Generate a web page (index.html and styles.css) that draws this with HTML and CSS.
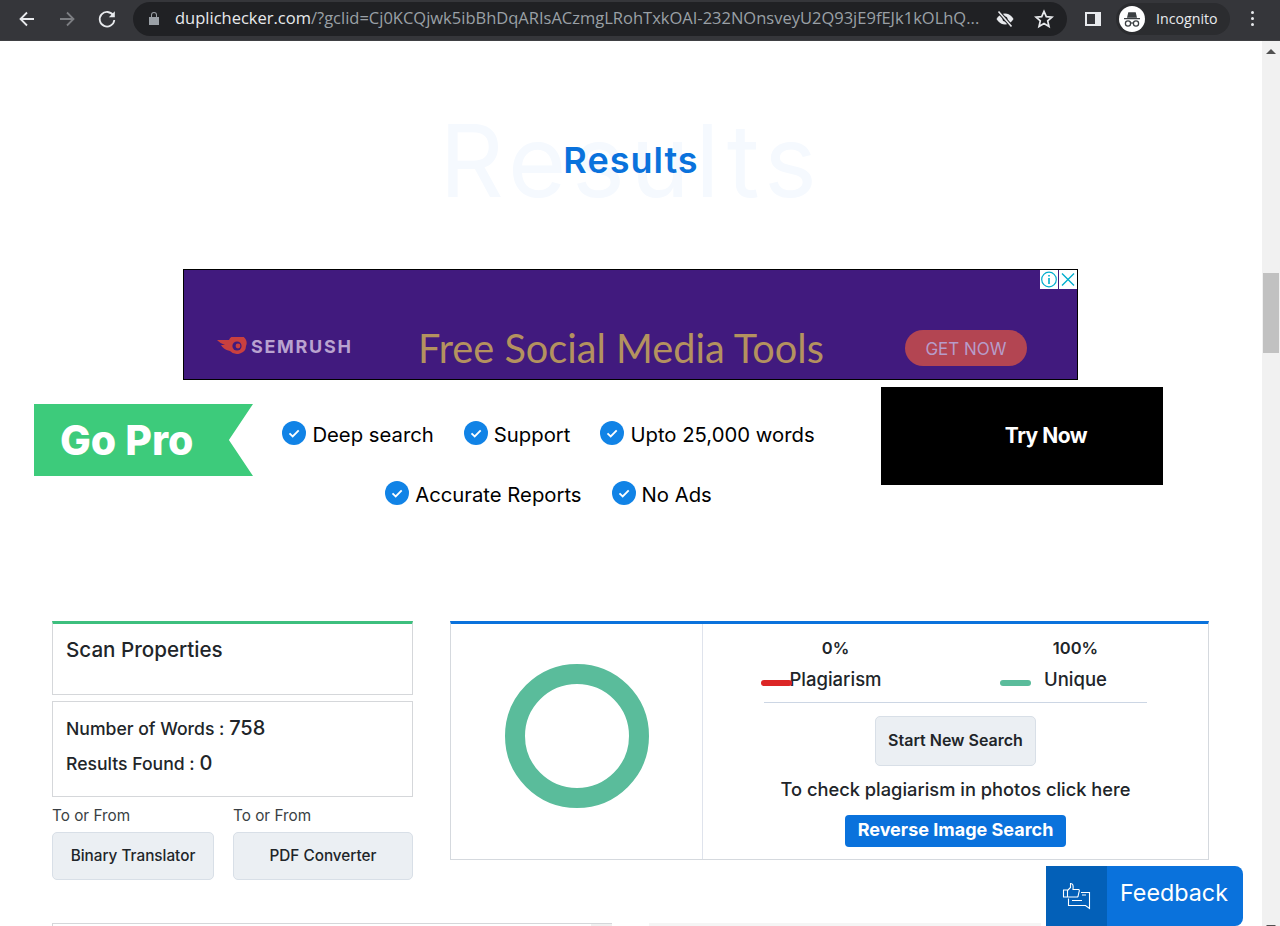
FILE: index.html
```html
<!DOCTYPE html>
<html lang="en">
<head>
    <meta charset="UTF-8">
    <meta name="viewport" content="width=device-width, initial-scale=1.0">
    <title>Duplichecker Results</title>
    <link rel="stylesheet" href="styles.css">
</head>
<body>
    <!-- browser toolbar -->
    <div class="browserBar">
        <div class="navIcons">
            <svg class="navIcon" viewBox="0 0 20 20"><path d="M17 10H4M10 3.5 3.5 10l6.500 6.500" fill="none" stroke="#e8eaed" stroke-width="1.800"/></svg>
            <svg class="navIcon" viewBox="0 0 20 20"><path d="M3 10h13M10 3.500l6.500 6.500-6.500 6.500" fill="none" stroke="#7c7e82" stroke-width="1.800"/></svg>
            <svg class="navIcon" viewBox="0 0 20 20"><path d="M16.300 6.500A7.300 7.300 0 1 0 17.300 11" fill="none" stroke="#e8eaed" stroke-width="1.800"/><path d="M17.800 2.200v6h-6z" fill="#e8eaed"/></svg>
        </div>
        <div class="omnibox">
            <svg class="lockIcon" viewBox="0 0 12 15"><path d="M1 6h10v8H1zM3 6V4a3 3 0 0 1 6 0v2" fill="#9aa0a6"/><path d="M4 6V4a2 2 0 0 1 4 0v2z" fill="#202124"/></svg>
            <div class="urlText"><span class="urlHost">duplichecker.com</span>/?gclid=Cj0KCQjwk5ibBhDqARIsACzmgLRohTxkOAI-232NOnsveyU2Q93jE9fEJk1kOLhQ...</div>
            <svg class="eyeIcon" viewBox="0 0 20 20"><path d="M1.500 10S4.500 4.500 10 4.500 18.500 10 18.500 10 15.500 15.500 10 15.500 1.500 10 1.500 10z" fill="#e8eaed"/><circle cx="10" cy="10" r="2.500" fill="#202124"/><path d="M3.500 2.500l13 15" stroke="#202124" stroke-width="3.500"/><path d="M3.500 2.500l13 15" stroke="#e8eaed" stroke-width="1.600"/></svg>
            <svg class="starIcon" viewBox="0 0 20 20"><path d="M10 2.300l2.300 5.300 5.700.5-4.300 3.800 1.300 5.600-5-3-5 3 1.300-5.600L2 8.100l5.700-.5z" fill="none" stroke="#e8eaed" stroke-width="1.700"/></svg>
        </div>
        <svg class="panelIcon" viewBox="0 0 18 18"><path d="M1 2h16v14H1z" fill="#e8eaed"/><path d="M3 4h8v10H3z" fill="#35363a"/></svg>
        <div class="incognitoPill">
            <svg class="incognitoIcon" viewBox="0 0 26 26"><circle cx="13" cy="13" r="13" fill="#fff"/><path d="M5 12h16v1.300H5zM8 11.800l1.300-5.600h7.400l1.300 5.600z" fill="#3c4043"/><circle cx="9" cy="17.500" r="2.600" fill="none" stroke="#3c4043" stroke-width="1.300"/><circle cx="17" cy="17.500" r="2.600" fill="none" stroke="#3c4043" stroke-width="1.300"/><path d="M11.500 17h3" stroke="#3c4043" stroke-width="1.200"/></svg>
            <span>Incognito</span>
        </div>
        <div class="menuDots"><i></i><i></i><i></i></div>
    </div>

    <div class="viewport">
        <div class="page">
            <div class="resultsHead">
                <span class="ghostTitle">Results</span>
                <h1 class="mainTitle">Results</h1>
            </div>

            <!-- ad banner -->
            <div class="adBanner">
                <div class="adClose">
                    <svg class="adBtn" viewBox="0 0 18 18"><circle cx="9" cy="9" r="7.300" fill="none" stroke="#00aecd" stroke-width="1.200"/><path d="M9 7.500v6M9 4.500v1.500" stroke="#00aecd" stroke-width="1.600"/></svg>
                    <svg class="adBtn" viewBox="0 0 18 18"><path d="M3 3l12 12M15 3 3 15" stroke="#00aecd" stroke-width="1.400"/></svg>
                </div>
                <div class="semrushLogo">
                    <svg class="semrushIcon" viewBox="0 0 30 18"><path d="M0 3h12a9 8 0 0 1 17 6 9 8 0 0 1-16 5 C8 13 5 10 4 8h4C5 7 2 5 0 3z" fill="#c9403f"/><circle cx="20" cy="9" r="4.600" fill="#411a7e"/><circle cx="21" cy="9" r="2.400" fill="#c9403f"/></svg>
                    <span>SEMRUSH</span>
                </div>
                <div class="adText">Free Social Media Tools</div>
                <div class="adButton">GET NOW</div>
            </div>

            <!-- go pro strip -->
            <div class="proRow">
                <div class="goPro">Go Pro</div>
                <div class="features">
                    <div class="featureLine">
                        <div class="feature"><svg class="tick" viewBox="0 0 24 24"><circle cx="12" cy="12" r="12" fill="#1183e6"/><path d="M7.500 12.300l3.200 3.200 6-6.200" fill="none" stroke="#fff" stroke-width="1.800"/></svg>Deep search</div>
                        <div class="feature"><svg class="tick" viewBox="0 0 24 24"><circle cx="12" cy="12" r="12" fill="#1183e6"/><path d="M7.500 12.300l3.200 3.200 6-6.200" fill="none" stroke="#fff" stroke-width="1.800"/></svg>Support</div>
                        <div class="feature"><svg class="tick" viewBox="0 0 24 24"><circle cx="12" cy="12" r="12" fill="#1183e6"/><path d="M7.500 12.300l3.200 3.200 6-6.200" fill="none" stroke="#fff" stroke-width="1.800"/></svg>Upto 25,000 words</div>
                    </div>
                    <div class="featureLine">
                        <div class="feature"><svg class="tick" viewBox="0 0 24 24"><circle cx="12" cy="12" r="12" fill="#1183e6"/><path d="M7.500 12.300l3.200 3.200 6-6.200" fill="none" stroke="#fff" stroke-width="1.800"/></svg>Accurate Reports</div>
                        <div class="feature"><svg class="tick" viewBox="0 0 24 24"><circle cx="12" cy="12" r="12" fill="#1183e6"/><path d="M7.500 12.300l3.200 3.200 6-6.200" fill="none" stroke="#fff" stroke-width="1.800"/></svg>No Ads</div>
                    </div>
                </div>
                <div class="tryNow">Try Now</div>
            </div>

            <div class="resultColumns">
                <div class="leftCol">
                    <div class="propCard scanTitle">Scan Properties</div>
                    <div class="propCard propStats">
                        <p class="statLine">Number of Words : <b>758</b></p>
                        <p class="statLine">Results Found : <b>0</b></p>
                    </div>
                    <div class="toolLinks">
                        <div class="toolLink toolLinkA">
                            <span class="toolLabel">To or From</span>
                            <div class="greyBtn">Binary Translator</div>
                        </div>
                        <div class="toolLink toolLinkB">
                            <span class="toolLabel">To or From</span>
                            <div class="greyBtn">PDF Converter</div>
                        </div>
                    </div>
                </div>

                <div class="reportPanel">
                    <div class="donutCell"><div class="donut"></div></div>
                    <div class="summaryCell">
                        <div class="scoreRow">
                            <div class="score">
                                <strong>0%</strong>
                                <span class="scoreName"><i class="dash dashRed"></i>Plagiarism</span>
                            </div>
                            <div class="score">
                                <strong>100%</strong>
                                <span class="scoreName"><i class="dash dashGreen"></i>Unique</span>
                            </div>
                        </div>
                        <div class="scoreRule"></div>
                        <div class="greyBtn newSearch">Start New Search</div>
                        <p class="photoNote">To check plagiarism in photos click here</p>
                        <div class="reverseBtn">Reverse Image Search</div>
                    </div>
                </div>
            </div>

            <div class="nextRow">
                <div class="nextPanel"><div class="nextPanelTab"></div></div>
                <div class="nextSide"></div>
            </div>

            <!-- sticky feedback tab -->
            <div class="feedback">
                <div class="feedbackIcon">
                    <svg viewBox="0 0 30 30" width="30" height="30"><path d="M1.500 9h4v7h-4zM5.500 9.500l3-3V2.500c2.500 0 3 2 2.500 6h5.500c1 0 1 1.500.5 2.500l-1 4.500c-.3.700-1 .500-1.500.500H5.500" fill="none" stroke="#fff" stroke-width="1.100"/><path d="M19 11.500h8.500v16l-4-3H6.500v-7M10 19.500h10M20 14h4" fill="none" stroke="#fff" stroke-width="1.100"/></svg>
                </div>
                <div class="feedbackText">Feedback</div>
            </div>
        </div>
        <div class="scrollbar">
            <div class="arrowUp"></div>
            <div class="scrollThumb"></div>
            <div class="arrowDown"></div>
        </div>
    </div>
</body>
</html>
```

FILE: styles.css
```css
html, body {
    margin: 0;
    padding: 0;
    height: 926px;
    overflow: hidden;
    background-color: #fff;
    font-family: Inter, "Noto Sans", sans-serif;
    color: #212529;
}

/* browser toolbar */
.browserBar {
    display: flex;
    align-items: center;
    height: 41px;
    box-sizing: border-box;
    padding-bottom: 3px;
    background-color: #35363a;
    border-bottom: 1px solid #3f4043;
}

.navIcons {
    display: flex;
    gap: 20px;
    padding-left: 17px;
}

.navIcon {
    width: 20px;
    height: 20px;
}

.omnibox {
    display: flex;
    align-items: center;
    width: 934px;
    height: 34px;
    margin-left: 16px;
    border-radius: 17px;
    background-color: #202124;
}

.lockIcon {
    width: 12px;
    height: 15px;
    margin-left: 15px;
}

.urlText {
    width: 806px;
    margin-left: 15px;
    padding-bottom: 2px;
    font-family: "Open Sans", sans-serif;
    font-size: 16.500px;
    white-space: nowrap;
    overflow: hidden;
    color: #9aa0a6;
}

.urlHost {
    color: #e8eaed;
}

.eyeIcon {
    width: 20px;
    height: 20px;
    margin-left: 14px;
}

.starIcon {
    width: 20px;
    height: 20px;
    margin-left: 19px;
}

.panelIcon {
    width: 18px;
    height: 18px;
    margin-left: 17px;
}

.incognitoPill {
    display: flex;
    align-items: center;
    gap: 11px;
    box-sizing: border-box;
    width: 114px;
    height: 32px;
    margin-left: 14px;
    padding-left: 3px;
    border-radius: 16px;
    background-color: #2b2c2f;
    font-family: "Open Sans", sans-serif;
    font-size: 14.200px;
    color: #e8eaed;
}

.incognitoIcon {
    width: 26px;
    height: 26px;
}

.menuDots {
    display: flex;
    flex-direction: column;
    gap: 3px;
    margin-left: 21px;
}

.menuDots i {
    width: 3px;
    height: 3px;
    border-radius: 50%;
    background-color: #e8eaed;
}

.viewport {
    display: flex;
    height: 885px;
}

.page {
    position: relative;
    flex: 1;
    overflow: hidden;
}

.scrollbar {
    box-sizing: border-box;
    width: 18px;
    padding-top: 8px;
    overflow: hidden;
    background-color: #f1f1f1;
}

.arrowUp {
    width: 0;
    height: 0;
    margin-left: 4px;
    border-left: 5px solid transparent;
    border-right: 5px solid transparent;
    border-bottom: 5px solid #505050;
}

.scrollThumb {
    width: 16px;
    height: 80px;
    margin: 219px 0 0 1px;
    background-color: #c1c1c1;
}

.arrowDown {
    width: 0;
    height: 0;
    margin: 572px 0 0 4px;
    border-left: 5px solid transparent;
    border-right: 5px solid transparent;
    border-top: 5px solid #505050;
}

/* heading */
.resultsHead {
    position: relative;
    height: 228px;
    text-align: center;
}

.ghostTitle {
    position: absolute;
    left: 0;
    right: 0;
    top: 60px;
    font-size: 100px;
    line-height: 120px;
    font-weight: 400;
    letter-spacing: 5.700px;
    color: #f5f9fe;
}

.mainTitle {
    position: relative;
    margin: 0;
    padding-top: 96px;
    font-size: 36px;
    line-height: 46px;
    font-weight: 600;
    letter-spacing: 1px;
    color: #0a72dc;
}

/* ad */
.adBanner {
    position: relative;
    display: flex;
    align-items: center;
    box-sizing: border-box;
    width: 895px;
    height: 111px;
    margin-left: 183px;
    padding-top: 47px;
    background-color: #411a7e;
    border: 1px solid #000;
}

.adClose {
    position: absolute;
    top: 0;
    right: 0;
    display: flex;
    gap: 1px;
    background-color: #411a7e;
}

.adBtn {
    width: 18px;
    height: 19px;
    background-color: #fff;
}

.semrushLogo {
    display: flex;
    align-items: center;
    gap: 4px;
    width: 201px;
    margin-left: 33px;
    padding-bottom: 4px;
    font-size: 18px;
    font-weight: 700;
    letter-spacing: 1.700px;
    color: #b9a3cf;
}

.semrushIcon {
    width: 30px;
    height: 18px;
}

.adText {
    width: 487px;
    padding-bottom: 2px;
    font-family: Lato, sans-serif;
    font-size: 39.700px;
    color: #b4925f;
}

.adButton {
    width: 122px;
    height: 36px;
    border-radius: 18px;
    background-color: #b34552;
    color: #b79cc9;
    font-size: 17px;
    line-height: 38px;
    text-align: center;
}

/* go pro strip */
.proRow {
    display: flex;
    height: 98px;
    margin-top: 7px;
    padding-left: 34px;
}

.goPro {
    box-sizing: border-box;
    width: 219px;
    height: 72px;
    margin-top: 17px;
    padding-left: 26px;
    clip-path: polygon(0 0, 100% 0, 89% 50%, 100% 100%, 0 100%);
    background-color: #3dcb7b;
    color: #fff;
    font-size: 41px;
    line-height: 72px;
    font-weight: 800;
}

.features {
    width: 591px;
    padding-top: 29px;
    margin-right: 37px;
}

.featureLine {
    display: flex;
    justify-content: center;
    gap: 30px;
    height: 60px;
}

.feature {
    display: flex;
    align-items: flex-start;
    gap: 6px;
    font-size: 20.300px;
    line-height: 38px;
    color: #000;
}

.tick {
    width: 24px;
    height: 24px;
    margin-top: 5px;
}

.tryNow {
    width: 282px;
    height: 98px;
    background-color: #000;
    color: #fff;
    font-size: 21px;
    font-weight: 700;
    letter-spacing: -0.500px;
    line-height: 98px;
    text-align: center;
    padding-left: 48px;
    box-sizing: border-box;
}

/* result columns */
.resultColumns {
    display: flex;
    gap: 37px;
    margin-top: 136px;
    padding-left: 52px;
}

.leftCol {
    width: 361px;
}

.propCard {
    box-sizing: border-box;
    border: 1px solid #d5d7da;
}

.scanTitle {
    height: 74px;
    padding: 12px 13px;
    border-top: 3px solid #3dbf7e;
    font-size: 20.600px;
    font-weight: 500;
    line-height: 28px;
}

.propStats {
    height: 96px;
    margin-top: 6px;
    padding: 9px 13px;
}

.statLine {
    margin: 0;
    height: 35px;
    font-size: 17.600px;
    line-height: 35px;
    font-weight: 500;
}

.statLine b {
    font-size: 20px;
    font-weight: 500;
}

.toolLinks {
    display: flex;
    justify-content: space-between;
    margin-top: 8px;
}

.toolLinkA {
    width: 162px;
}

.toolLinkB {
    width: 180px;
}

.toolLabel {
    display: block;
    height: 27px;
    font-size: 15.300px;
    line-height: 21px;
    color: #3a3f44;
}

.greyBtn {
    box-sizing: border-box;
    height: 48px;
    border: 1px solid #d8dfe7;
    border-radius: 5px;
    background-color: #ebeff3;
    font-size: 15.300px;
    font-weight: 500;
    line-height: 45px;
    text-align: center;
}

.reportPanel {
    display: flex;
    box-sizing: border-box;
    width: 759px;
    height: 239px;
    border: 1px solid #d5d9de;
    border-top: 3px solid #0a72dc;
}

.donutCell {
    display: flex;
    align-items: center;
    justify-content: center;
    width: 252px;
    border-right: 1px solid #dfe3ec;
    padding-bottom: 11px;
    box-sizing: border-box;
}

.donut {
    box-sizing: border-box;
    width: 144px;
    height: 144px;
    border: 20px solid #5abc9b;
    border-radius: 50%;
}

.summaryCell {
    flex: 1;
    display: flex;
    flex-direction: column;
    align-items: center;
}

.scoreRow {
    display: flex;
    width: 420px;
    justify-content: space-between;
    padding-top: 13px;
}

.score {
    display: flex;
    flex-direction: column;
    align-items: center;
    width: 180px;
    gap: 8px;
}

.score strong {
    font-size: 16.500px;
    line-height: 22px;
    font-weight: 600;
}

.scoreName {
    position: relative;
    font-size: 18.500px;
    line-height: 24px;
    font-weight: 500;
}

.dash {
    position: absolute;
    top: 13px;
    height: 6px;
    width: 31px;
    border-radius: 3px;
}

.dashRed {
    left: -28px;
    background-color: #dc2626;
}

.dashGreen {
    left: -44px;
    background-color: #5abc9b;
}

.scoreRule {
    width: 383px;
    height: 1px;
    margin-top: 11px;
    background-color: #ccd6e4;
}

.newSearch {
    width: 161px;
    height: 50px;
    margin-top: 13px;
    font-size: 16px;
    font-weight: 600;
    line-height: 46px;
}

.photoNote {
    margin: 11px 0 0;
    font-size: 18.300px;
    line-height: 24px;
    font-weight: 500;
}

.reverseBtn {
    width: 221px;
    height: 32px;
    margin-top: 14px;
    border-radius: 4px;
    background-color: #0a72dc;
    color: #fff;
    font-size: 18px;
    font-weight: 700;
    line-height: 30px;
    text-align: center;
}

.nextRow {
    display: flex;
    height: 40px;
    margin: 43px 0 0 52px;
}

.nextPanel {
    box-sizing: border-box;
    width: 560px;
    padding-left: 538px;
    border: 1px solid #d5d7da;
}

.nextPanelTab {
    width: 21px;
    height: 20px;
    background-color: #f0f0f0;
}

.nextSide {
    width: 392px;
    margin-left: 37px;
    background-color: #f5f5f5;
}

/* feedback tab */
.feedback {
    position: absolute;
    left: 1046px;
    top: 825px;
    display: flex;
    width: 197px;
    height: 60px;
    border-radius: 0 8px 8px 0;
    overflow: hidden;
    background-color: #0a72dc;
    color: #fff;
}

.feedbackIcon {
    display: flex;
    align-items: center;
    justify-content: center;
    width: 61px;
    background-color: #0360b8;
}

.feedbackText {
    padding-left: 13px;
    font-size: 23.300px;
    line-height: 54px;
}
```
